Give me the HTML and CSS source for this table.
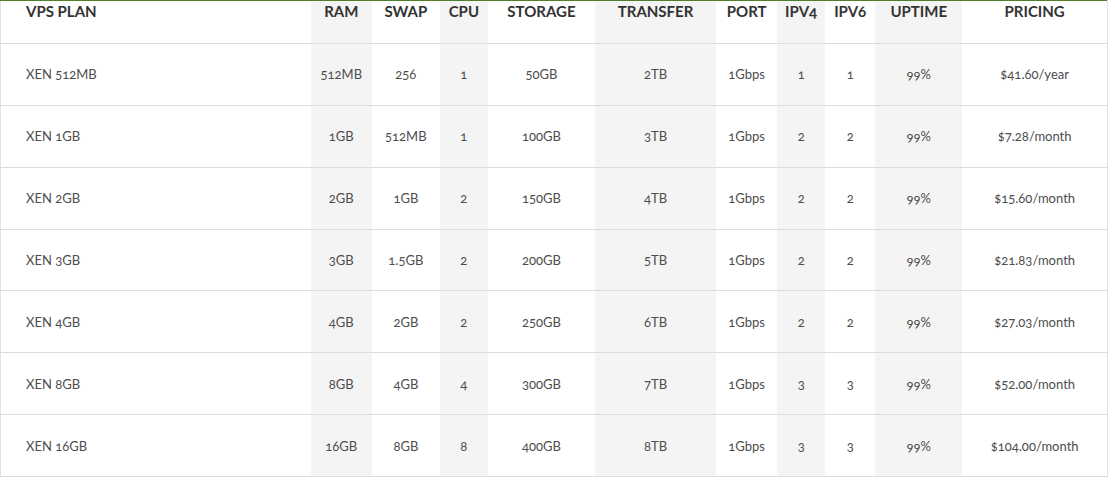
FILE: index.html
```html
<!DOCTYPE html>
<html>
<head>
<meta charset="utf-8">
<link rel="stylesheet" href="styles.css">
</head>
<body>
<table class="plans">
  <colgroup>
    <col class="c-plan"><col class="c-ram alt"><col class="c-swap"><col class="c-cpu alt"><col class="c-storage"><col class="c-transfer alt"><col class="c-port"><col class="c-ipv4 alt"><col class="c-ipv6"><col class="c-uptime alt"><col class="c-pricing">
  </colgroup>
  <thead>
    <tr><th class="first">VPS PLAN</th><th>RAM</th><th>SWAP</th><th>CPU</th><th>STORAGE</th><th>TRANSFER</th><th>PORT</th><th>IPV4</th><th>IPV6</th><th>UPTIME</th><th>PRICING</th></tr>
  </thead>
  <tbody>
    <tr><td class="first">XEN 512MB</td><td>512MB</td><td>256</td><td>1</td><td>50GB</td><td>2TB</td><td>1Gbps</td><td>1</td><td>1</td><td>99%</td><td>$41.60/year</td></tr>
    <tr><td class="first">XEN 1GB</td><td>1GB</td><td>512MB</td><td>1</td><td>100GB</td><td>3TB</td><td>1Gbps</td><td>2</td><td>2</td><td>99%</td><td>$7.28/month</td></tr>
    <tr><td class="first">XEN 2GB</td><td>2GB</td><td>1GB</td><td>2</td><td>150GB</td><td>4TB</td><td>1Gbps</td><td>2</td><td>2</td><td>99%</td><td>$15.60/month</td></tr>
    <tr><td class="first">XEN 3GB</td><td>3GB</td><td>1.5GB</td><td>2</td><td>200GB</td><td>5TB</td><td>1Gbps</td><td>2</td><td>2</td><td>99%</td><td>$21.83/month</td></tr>
    <tr><td class="first">XEN 4GB</td><td>4GB</td><td>2GB</td><td>2</td><td>250GB</td><td>6TB</td><td>1Gbps</td><td>2</td><td>2</td><td>99%</td><td>$27.03/month</td></tr>
    <tr><td class="first">XEN 8GB</td><td>8GB</td><td>4GB</td><td>4</td><td>300GB</td><td>7TB</td><td>1Gbps</td><td>3</td><td>3</td><td>99%</td><td>$52.00/month</td></tr>
    <tr><td class="first">XEN 16GB</td><td>16GB</td><td>8GB</td><td>8</td><td>400GB</td><td>8TB</td><td>1Gbps</td><td>3</td><td>3</td><td>99%</td><td>$104.00/month</td></tr>
  </tbody>
</table>
</body>
</html>
```
FILE: styles.css
```css
html, body {
  margin: 0;
  padding: 0;
  background: #fff;
}
.plans {
  width: 1108px;
  table-layout: fixed;
  border-collapse: collapse;
  border-left: 1px solid #e2e2e2;
  border-right: 1px solid #e2e2e2;
  border-bottom: 1px solid #dcdcdc;
  border-top: 1px solid #4e7f2a;
  font-family: "Lato", "Open Sans", sans-serif;
  font-variant-numeric: oldstyle-nums;
}
.c-plan { width: 310px; }
.c-ram { width: 61px; }
.c-swap { width: 68px; }
.c-cpu { width: 48px; }
.c-storage { width: 107px; }
.c-transfer { width: 121px; }
.c-port { width: 61px; }
.c-ipv4 { width: 48px; }
.c-ipv6 { width: 50px; }
.c-uptime { width: 87px; }
.c-pricing { width: 145px; }
.alt { background: #f4f4f4; }
.plans th {
  height: 42px;
  padding: 0;
  vertical-align: top;
  font-size: 15px;
  font-weight: 700;
  color: #333;
  line-height: 21px;
  text-align: center;
  border-bottom: 1px solid #dcdcdc;
}
.plans td {
  height: 60.86px;
  padding: 0;
  font-size: 13px;
  color: #4d4d4d;
  text-align: center;
  vertical-align: middle;
  border-bottom: 1px solid #dcdcdc;
}
.plans .first {
  text-align: left;
  padding-left: 25px;
}
```
